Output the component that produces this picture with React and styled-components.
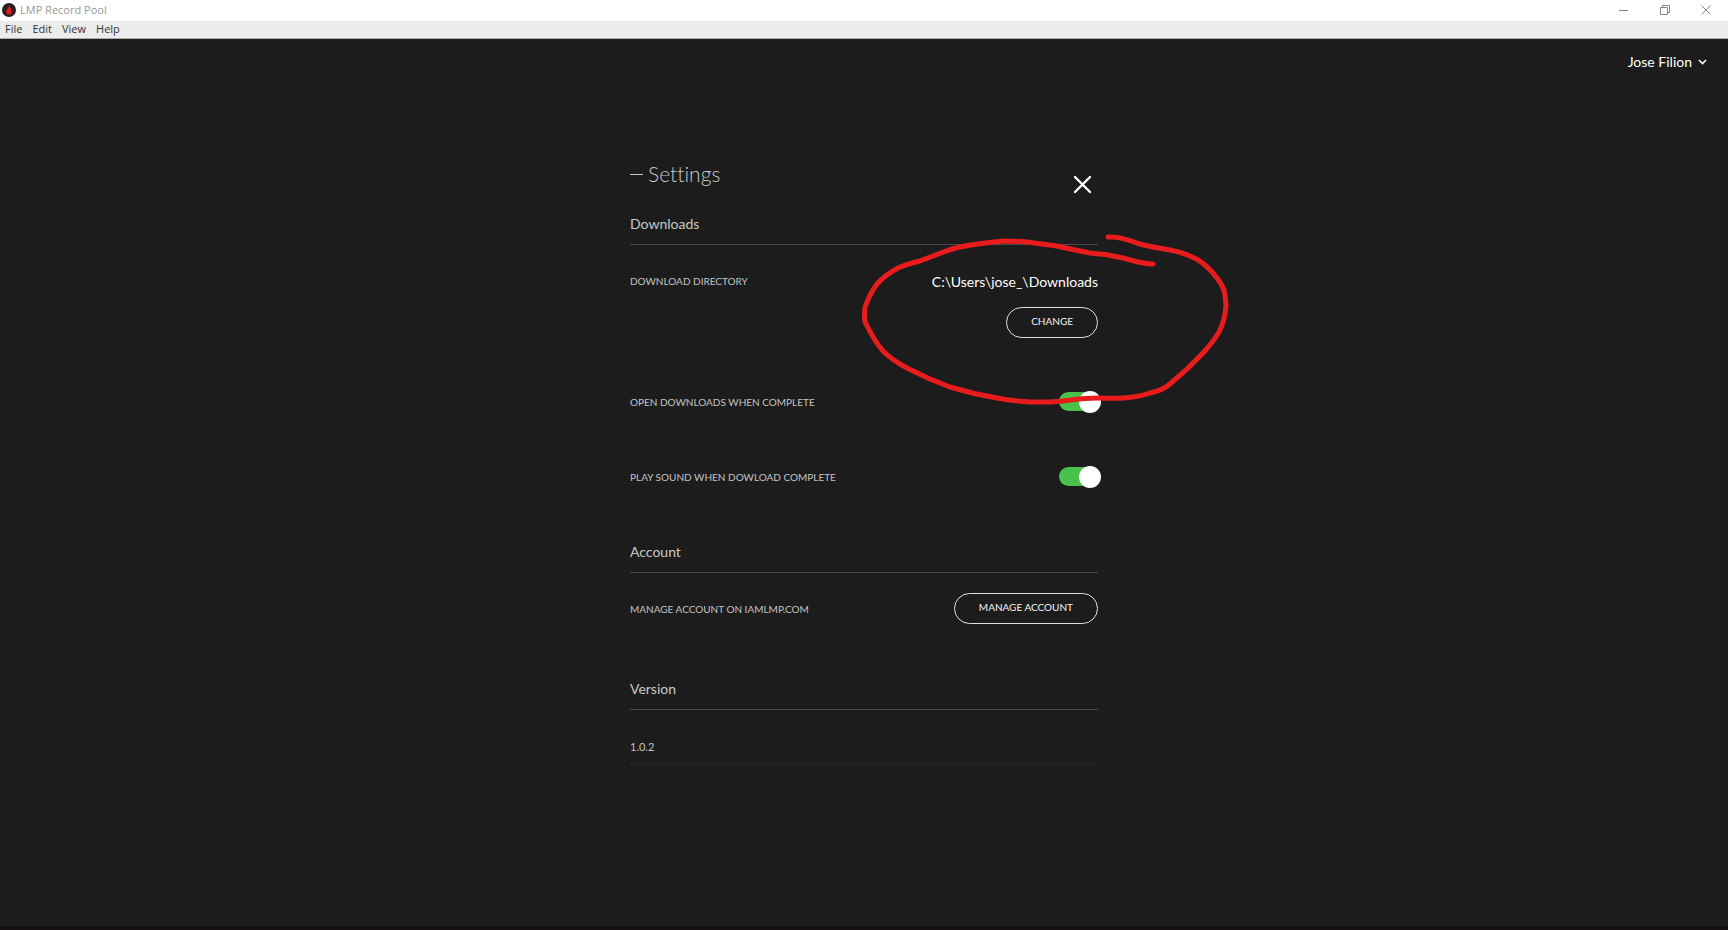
import React, { useState } from "react";
import styled, { createGlobalStyle } from "styled-components";

const GlobalStyle = createGlobalStyle`
* {
    box-sizing: border-box;
}
body {
    margin: 0;
    background-color: #1c1c1c;
    font-family: Lato, "Liberation Sans", sans-serif;
    font-variant-ligatures: none;
}
`

const Window = styled.div`
display: flex;
flex-direction: column;
min-height: 100vh;
background-color: #1c1c1c;
border-bottom: 4px solid #161114;
`

const TitleBar = styled.header`
display: flex;
align-items: center;
justify-content: space-between;
height: 21px;
padding: 0 14px 2px 2px;
background-color: #ffffff;
color: #999999;
font-family: "Open Sans", sans-serif;
font-size: 11px;
`

const AppName = styled.div`
display: flex;
align-items: center;
gap: 4px;
`

const WindowControls = styled.div`
display: flex;
gap: 24px;
`

const ControlButton = styled.button`
display: flex;
align-items: center;
justify-content: center;
width: 17px;
height: 18px;
padding: 0;
border: none;
background: none;
color: #888888;
`

const MenuBar = styled.nav`
display: flex;
align-items: center;
gap: 10px;
height: 18px;
padding: 0 5px 2px;
background-color: #ececec;
border-bottom: 1px solid #a9adad;
`

const MenuButton = styled.button`
padding: 0;
border: none;
background: none;
color: #333333;
font-family: "Open Sans", sans-serif;
font-size: 11px;
line-height: 16px;
`

const UserBar = styled.div`
display: flex;
justify-content: flex-end;
padding: 14px 21px 0 0;
`

const UserButton = styled.button`
display: flex;
align-items: center;
gap: 6px;
padding: 0;
border: none;
background: none;
color: #ffffff;
font-family: inherit;
font-size: 14px;
line-height: 18px;
`

const Settings = styled.main`
position: relative;
width: 100%;
max-width: 468px;
margin: 91px auto 0;
`

const SettingsHeader = styled.div`
display: flex;
justify-content: space-between;
height: 52px;
`

const Title = styled.h1`
display: flex;
align-items: center;
gap: 5px;
height: 24px;
margin: 0;
color: #c8c8c8;
font-size: 21px;
font-weight: 300;
line-height: 24px;

&::before {
    content: "";
    width: 13px;
    height: 1px;
    background-color: #c8c8c8;
}
`

const CloseButton = styled.button`
align-self: flex-start;
display: flex;
margin: 13px 6px 0 0;
padding: 0;
border: none;
background: none;
color: #ffffff;
`

const Section = styled.section`
margin-bottom: ${props => props.$gap || 0}px;
`

const SectionTitle = styled.h2`
height: 31px;
margin: 0;
border-bottom: 1px solid #4a4a4a;
color: #c8c8c8;
font-size: 14px;
font-weight: 400;
line-height: 20px;
`

const Row = styled.div`
display: flex;
justify-content: space-between;
align-items: center;
height: ${props => props.$height}px;
`

const DirectoryRow = styled(Row)`
align-items: flex-start;
padding-top: 27px;
`

const Label = styled.label`
color: #c4c4c4;
font-size: 10px;
line-height: 18px;
`

const Directory = styled.div`
display: flex;
flex-direction: column;
align-items: flex-end;
gap: 15px;
`

const Path = styled.span`
color: #ffffff;
font-size: 14px;
line-height: 20px;
`

const PillButton = styled.button`
height: 31px;
padding: 0 24px 4px;
border: 1px solid #e0e0e0;
border-radius: 16px;
background: none;
color: #f4f4f4;
font-family: inherit;
font-size: 10px;
`

const Toggle = styled.input`
appearance: none;
display: flex;
align-items: center;
justify-content: ${props => props.checked ? "flex-end" : "flex-start"};
width: 39px;
height: 19px;
margin: 0;
border-radius: 10px;
background-color: ${props => props.checked ? "#4ac14a" : "#555555"};

&::before {
    content: "";
    width: 22px;
    height: 22px;
    margin-right: -3px;
    border-radius: 50%;
    background-color: #ffffff;
    flex-shrink: 0;
}
`

const Version = styled.p`
height: 55px;
margin: 0;
padding-top: 28px;
border-bottom: 1px dotted #333333;
color: #c4c4c4;
font-size: 11px;
line-height: 18px;
`

const Scribble = styled.svg`
position: absolute;
top: 68px;
left: 230px;
pointer-events: none;
`

function App(){

    const [openWhenComplete, setOpenWhenComplete] = useState(true)
    const [playSound, setPlaySound] = useState(true)

    return(
        <Window>
            <GlobalStyle />
            <TitleBar>
                <AppName>
                    <svg width="14" height="14" viewBox="0 0 14 14">
                        <circle cx="7" cy="7" r="7" fill="#26211f" />
                        <path d="M7 2C7.600 4 9.800 6.200 9.800 8.700A2.800 3 0 0 1 4.200 8.700C4.200 6.800 5.400 6.400 5.600 5.200C6.400 5 6.800 3.500 7 2Z" fill="#e8161c" />
                    </svg>
                    <span>LMP Record Pool</span>
                </AppName>
                <WindowControls>
                    <ControlButton aria-label="Minimize">
                        <svg width="10" height="10" fill="none" stroke="currentColor"><path d="M0 5.500H9" /></svg>
                    </ControlButton>
                    <ControlButton aria-label="Restore">
                        <svg width="10" height="10" fill="none" stroke="currentColor"><path d="M.5 2.500H7.500V9.500H.5ZM2.500 2.500V.5H9.500V7.500H7.500" /></svg>
                    </ControlButton>
                    <ControlButton aria-label="Close window">
                        <svg width="10" height="10" fill="none" stroke="currentColor"><path d="M.5 .5L9.500 9.500M9.500 .5L.5 9.500" /></svg>
                    </ControlButton>
                </WindowControls>
            </TitleBar>
            <MenuBar>
                <MenuButton>File</MenuButton>
                <MenuButton>Edit</MenuButton>
                <MenuButton>View</MenuButton>
                <MenuButton>Help</MenuButton>
            </MenuBar>
            <UserBar>
                <UserButton>
                    Jose Filion
                    <svg width="9" height="6" fill="none" stroke="currentColor" strokeWidth="1.6"><path d="M1 1L4.500 4.500L8 1" /></svg>
                </UserButton>
            </UserBar>
            <Settings>
                <SettingsHeader>
                    <Title>Settings</Title>
                    <CloseButton aria-label="Close settings">
                        <svg width="19" height="19" fill="none" stroke="currentColor" strokeWidth="2.400" strokeLinecap="round"><path d="M2 2L17 17M17 2L2 17" /></svg>
                    </CloseButton>
                </SettingsHeader>

                <Section $gap={28}>
                    <SectionTitle>Downloads</SectionTitle>
                    <DirectoryRow $height={119}>
                        <Label as="span">DOWNLOAD DIRECTORY</Label>
                        <Directory>
                            <Path>C:\Users\jose_\Downloads</Path>
                            <PillButton>CHANGE</PillButton>
                        </Directory>
                    </DirectoryRow>
                    <Row $height={75}>
                        <Label htmlFor="open">OPEN DOWNLOADS WHEN COMPLETE</Label>
                        <Toggle id="open" type="checkbox" checked={openWhenComplete} onChange={(evento) => setOpenWhenComplete(evento.target.checked)} />
                    </Row>
                    <Row $height={75}>
                        <Label htmlFor="sound">PLAY SOUND WHEN DOWLOAD COMPLETE</Label>
                        <Toggle id="sound" type="checkbox" checked={playSound} onChange={(evento) => setPlaySound(evento.target.checked)} />
                    </Row>
                </Section>

                <Section $gap={35}>
                    <SectionTitle>Account</SectionTitle>
                    <Row $height={71}>
                        <Label as="span">MANAGE ACCOUNT ON IAMLMP.COM</Label>
                        <PillButton>MANAGE ACCOUNT</PillButton>
                    </Row>
                </Section>

                <Section>
                    <SectionTitle>Version</SectionTitle>
                    <Version>1.0.2</Version>
                </Section>

                <Scribble width="370" height="180" viewBox="860 230 370 180" fill="none" stroke="#e81c1c" strokeWidth="5" strokeLinecap="round" strokeLinejoin="round">
                    <path d="M1108 237C1122 236 1130 241 1140 244C1150 247 1160 248 1170 250Q1181 252 1190 256Q1198 259 1205 265Q1212 271 1217 278Q1222 285 1224 290Q1226 298 1226 306Q1225 320 1219 332Q1213 342 1203 353Q1188 369 1170 384Q1163 390 1150 393Q1142 396 1133 397C1120 399 1110 398 1097 398C1080 398 1066 401 1050 402Q1040 402 1030 402Q1013 401 997 398Q973 394 950 387Q928 379 907 368Q892 360 883 351Q875 342 865 322Q864 314 865 307Q870 293 877 284Q885 275 898 268Q907 264 920 261C934 256 946 250 960 247Q974 244 1003 241Q1015 241 1027 242L1057 246Q1074 250 1090 253Q1107 254 1123 258Q1143 264 1153 264" />
                </Scribble>
            </Settings>
        </Window>
    )
}

export default App
